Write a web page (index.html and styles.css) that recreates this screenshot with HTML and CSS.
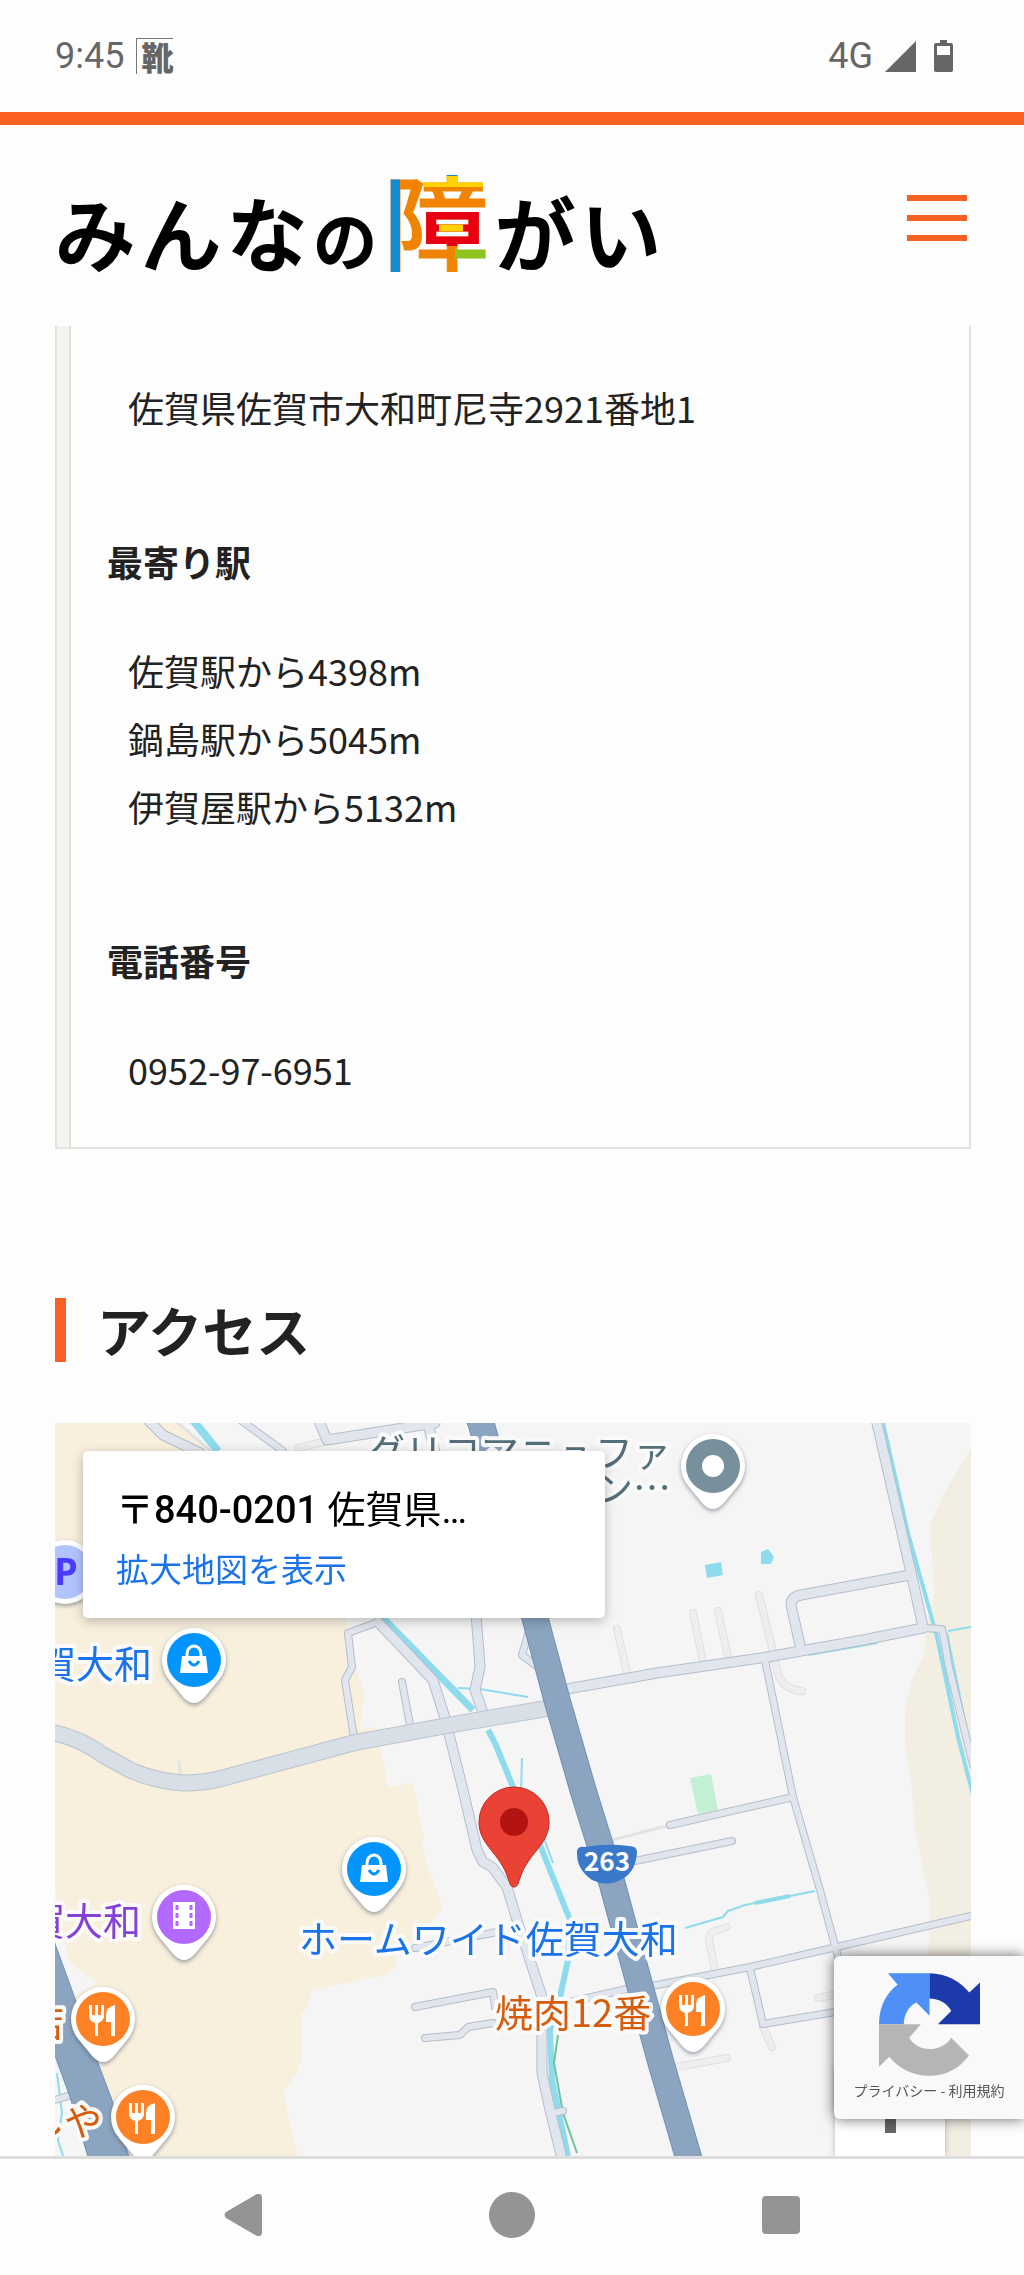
FILE: index.html
```html
<!DOCTYPE html>
<html lang="ja">
<head>
    <meta charset="UTF-8">
    <meta name="viewport" content="width=device-width, initial-scale=1.0">
    <title>みんなの障がい</title>
    <link rel="stylesheet" href="styles.css">
</head>
<body>
    <div class="status-bar">
        <div class="status-left">
            <span>9:45</span>
            <span class="status-badge">靴</span>
        </div>
        <div class="status-right">
            <span>4G</span>
            <svg width="31" height="31" viewBox="0 0 31 31"><path d="M31 0V31H0Z" fill="#666"/></svg>
            <svg class="battery" width="19" height="32" viewBox="0 0 19 32">
                <path d="M6 0H13V3H17Q19 3 19 5V30Q19 32 17 32H2Q0 32 0 30V5Q0 3 2 3H6Z" fill="#666"/>
                <rect x="3" y="6" width="13" height="9" fill="#fff"/>
            </svg>
        </div>
    </div>

    <header class="header">
        <a class="logo" href="#">
            <span>み</span><span>ん</span><span>な</span><span class="logo-small">の</span><span class="logo-color">障</span><span>が</span><span>い</span>
        </a>
        <button class="menu-button" type="button" aria-label="メニュー">
            <span></span>
            <span></span>
            <span></span>
        </button>
    </header>

    <main class="main">
        <dl class="info">
            <dd>佐賀県佐賀市大和町尼寺2921番地1</dd>
            <dt>最寄り駅</dt>
            <dd>佐賀駅から4398m<br>鍋島駅から5045m<br>伊賀屋駅から5132m</dd>
            <dt>電話番号</dt>
            <dd>0952-97-6951</dd>
        </dl>

        <h2 class="section-title">アクセス</h2>

        <div class="map">
            <svg class="map-canvas" viewBox="0 0 916 733" preserveAspectRatio="xMidYMin slice">
                <defs>
                    <path id="pin" d="M0 43Q-5 43-10 38L-24 21A32 32 0 1 1 24 21L10 38Q5 43 0 43Z" fill="#fff"/>
                    <g id="bag">
                        <path d="M-12-4H12L14 13H-14Z" fill="#fff"/>
                        <path d="M-7-3V-6A7 8 0 0 1 7-6V-3" fill="none" stroke="#fff" stroke-width="3"/>
                        <path d="M-5 1Q0 9 5 1" fill="none" stroke="#0395ff" stroke-width="3"/>
                    </g>
                    <g id="food" fill="#fff">
                        <path d="M-14-14H-11V-4H-8V-14H-5V-4H-2V-14H1V-3Q1 2-5 4V17H-8V4Q-14 2-14-3Z"/>
                        <path d="M12-14V17H8V3H3V-4Q3-12 12-14Z"/>
                    </g>
                </defs>

                <rect width="916" height="733" fill="#f5f5f5"/>
                <!-- land areas -->
                <path fill="#f8efdd" d="M0 0H123L170 40 290 195 295 220 300 244 309 270 305 307 320 304 327 334 333 364 358 360 369 414 367 417 370 437 388 484 375 500 341 534V544L333 551 258 567 252 584 246 590 247 634 242 650 228 669 243 733H73L38 634 18 575 43 559 33 554 13 537 8 507 0 467Z"/>
                <path fill="#f3eee2" d="M916 25 888 72 875 102 879 170 872 204 868 234 857 257 850 287V320L857 367 860 407 875 480 873 534V733H916Z"/>
                <path fill="#c3efd2" d="M635 355 656 351 663 387 643 391Z"/>

                <!-- water -->
                <g fill="none" stroke="#8fdbee" stroke-linejoin="round">
                    <path stroke-width="8" d="M137-4 163 28"/>
                    <path stroke-width="7" d="M326 193 418 287"/>
                    <path stroke-width="6" d="M433 307 440 320 458 364 487 427 515 497 513 537 505 574 495 607 497 657 513 733"/>
                    <path stroke-width="2" d="M403 265 425 266 473 274M467 335 466 370M2 650 7 690 3 717 8 733M487 410 498 440"/>
                    <path stroke-width="4" d="M828 0 853 110 882 214 903 314 918 372"/>
                    <path stroke-width="2" d="M893 208 916 204M892 210 914 317M630 505 668 494 673 488 690 482 735 473 760 468"/>
                    <path stroke-width="4" d="M753 231 822 219M700 480 735 473"/>
                </g>
                <path fill="#8fdbee" d="M650 142 666 139 668 152 652 155ZM706 129 713 126 719 134 716 141H706Z"/>
                <path fill="none" stroke="#6cc3a0" stroke-width="2" d="M503 612 499 640 508 690 522 730"/>

                <!-- faint lanes -->
                <g fill="none" stroke-linecap="round" stroke-linejoin="round">
                    <path stroke="#e0e0e0" stroke-width="8" d="M562 206 572 250M638 190 648 239M663 188 673 234M704 172 717 225 723 250Q727 266 747 268M672 504 660 508Q653 510 654 517L660 547M708 604 717 624M622 644 672 635M778 572 763 575M243 25 268 19"/>
                    <path stroke="#eee" stroke-width="6" d="M562 206 572 250M638 190 648 239M663 188 673 234M704 172 717 225 723 250Q727 266 747 268M672 504 660 508Q653 510 654 517L660 547M708 604 717 624M622 644 672 635M778 572 763 575M243 25 268 19"/>
                    <path stroke="#e3e3e5" stroke-width="3" d="M615 402 557 417M123 0 158 30M124 339 126 355"/>
                </g>

                <!-- minor roads: edge, then fill -->
                <g fill="none" stroke="#b5bdcb" stroke-linecap="round" stroke-linejoin="round">
                    <path stroke-width="11" d="M323 199 378 257 390 295 408 367 422 427 428 439 437 444 452 464 462 497 487 574V650L495 687 508 740M421 190 425 244 420 267 428 290M821-4 857 154 868 204M512 266 602 250 712 234 808 217 868 205M855 152 746 172Q736 174 736 182L745 222M92-4 108 12 145 30M263-4 272 17 380 0M372-4 380 30"/>
                    <path stroke-width="8" d="M323 199 293 210 297 244 290 257 299 315M347 259 355 302M473 211 467 232 480 242M187-2 228 28M868 205 887 206 890 220 893 240 918 342M710 237 738 374 765 467 783 534M738 374 615 402M677 418 575 439M920 492 782 524 695 544 597 563M572 566 515 579M695 545 708 601 780 589M360 584 438 569 440 584M370 615 405 612 413 604 438 600M360 525 442 509M497 690 508 688M0 677 13 673"/>
                </g>
                <g fill="none" stroke="#e1e6ee" stroke-linecap="round" stroke-linejoin="round">
                    <path stroke-width="9" d="M323 199 378 257 390 295 408 367 422 427 428 439 437 444 452 464 462 497 487 574V650L495 687 508 740M421 190 425 244 420 267 428 290M821-4 857 154 868 204M512 266 602 250 712 234 808 217 868 205M855 152 746 172Q736 174 736 182L745 222M92-4 108 12 145 30M263-4 272 17 380 0M372-4 380 30"/>
                    <path stroke-width="6" d="M323 199 293 210 297 244 290 257 299 315M347 259 355 302M473 211 467 232 480 242M187-2 228 28M868 205 887 206 890 220 893 240 918 342M710 237 738 374 765 467 783 534M738 374 615 402M677 418 575 439M920 492 782 524 695 544 597 563M572 566 515 579M695 545 708 601 780 589M360 584 438 569 440 584M370 615 405 612 413 604 438 600M360 525 442 509M497 690 508 688M0 677 13 673"/>
                </g>

                <!-- main road -->
                <g fill="none" stroke-linejoin="round">
                    <path stroke="#bac4ce" stroke-width="17" d="M-4 309Q25 315 48 332L75 347Q100 358 128 360 150 360 168 355L235 337 298 320 395 302 494 285"/>
                    <path stroke="#d8dfe7" stroke-width="15" d="M-4 309Q25 315 48 332L75 347Q100 358 128 360 150 360 168 355L235 337 298 320 395 302 494 285"/>
                </g>

                <!-- highways -->
                <g fill="none" stroke-linejoin="round">
                    <path stroke="#6f92b8" stroke-width="27" d="M422-10 426 0 480 195 502 277 528 367 557 460 577 534 606 640 636 743"/>
                    <path stroke="#8ba4c0" stroke-width="25" d="M422-10 426 0 480 195 502 277 528 367 557 460 577 534 606 640 636 743"/>
                </g>
                <path fill="#8ba4c0" stroke="#6f92b8" stroke-width="1" d="M-1 518 18 570 38 627 57 677 74 734H33L15 674-1 630Z"/>

                <!-- national route sign -->
                <path fill="#3a78c9" d="M522 428Q523 423 530 424 552 420 574 423 582 423 582 429 581 447 569 455 553 465 537 457 521 446 522 428Z"/>
                <text class="route" x="552" y="448">263</text>

                <!-- pins -->
                <g class="pins">
                    <circle cx="10" cy="149" r="32" fill="#fff"/>
                    <use href="#pin" x="139" y="237"/>
                    <use href="#pin" x="319" y="446"/>
                    <use href="#pin" x="129" y="494"/>
                    <use href="#pin" x="48" y="596"/>
                    <use href="#pin" x="88" y="694"/>
                    <use href="#pin" x="638" y="586"/>
                    <use href="#pin" x="658" y="43"/>
                </g>
                <circle cx="10" cy="149" r="27" fill="#b2c4ff"/>
                <circle cx="139" cy="237" r="27" fill="#0395ff"/>
                <use href="#bag" x="139" y="237"/>
                <circle cx="319" cy="446" r="27" fill="#0395ff"/>
                <use href="#bag" x="319" y="446"/>
                <circle cx="129" cy="494" r="27" fill="#b368ff"/>
                <path d="M118 479H140V506H118Z" fill="#fff"/>
                <path d="M122 482V506M136 482V506" stroke="#b368ff" stroke-width="3" stroke-dasharray="5 3"/>
                <circle cx="48" cy="596" r="27" fill="#ff8126"/>
                <use href="#food" x="48" y="596"/>
                <circle cx="88" cy="694" r="27" fill="#ff8126"/>
                <use href="#food" x="88" y="694"/>
                <circle cx="638" cy="586" r="27" fill="#ff8126"/>
                <use href="#food" x="638" y="586"/>
                <circle cx="658" cy="43" r="27" fill="#78909c"/>
                <circle cx="658" cy="43" r="11" fill="#fff"/>
                <path d="M459 464C455 464 455 460 453 455 445 430 424 422 424 399A35 35 0 0 1 494 399C494 422 473 430 465 455 463 460 463 464 459 464Z" fill="#ea4335" stroke="#c5221f" stroke-width="1"/>
                <circle cx="459" cy="399" r="14" fill="#b31412"/>

                <!-- place names -->
                <text class="parking" x="-1" y="162">P</text>
                <g class="places">
                    <text class="place-gray" x="312" y="43">グリコマニュファ</text>
                    <text class="place-gray place-end" x="616" y="79">クチャリン…</text>
                    <text class="place-blue place-end" x="97" y="255">賀大和</text>
                    <text class="place-blue" x="244" y="530">ホームワイド佐賀大和</text>
                    <text class="place-purple place-end" x="86" y="512">賀大和</text>
                    <text class="place-orange" x="440" y="604">焼肉12番</text>
                    <text class="place-orange place-end" x="9" y="613">店</text>
                    <text class="place-orange place-end" x="47" y="712">しや</text>
                </g>
            </svg>

            <div class="map-card">
                <div class="map-address"><b>〒840-0201</b> 佐賀県…</div>
                <a class="map-link" href="#">拡大地図を表示</a>
            </div>
            <button class="map-zoom" type="button" aria-label="拡大"></button>
        </div>
    </main>

    <aside class="recaptcha">
        <svg width="101" height="103" viewBox="0 0 302 307">
            <path fill="#4e90f5" d="M27 0H151V127L112 88C92 96 75 120 74 153H0C0 95 27 55 56 35Z"/>
            <path fill="#1c3aa9" d="M151 0C200 0 245 25 270 58L302 28V153H176L216 113C205 92 180 76 151 76Z"/>
            <path fill="#b5b5b5" d="M0 153H125L90 194C105 215 125 227 151 227 180 227 205 212 216 193L269 246C240 285 200 307 151 307 100 307 57 283 31 250L0 280Z"/>
        </svg>
        <div class="recaptcha-links"><a href="#">プライバシー</a> - <a href="#">利用規約</a></div>
    </aside>

    <nav class="system-nav">
        <button type="button" aria-label="戻る">
            <svg width="38" height="42" viewBox="0 0 38 42"><path d="M33 0Q38-1 38 4V38Q38 43 33 42L2 24Q-1 21 2 18Z" fill="#949494"/></svg>
        </button>
        <button type="button" aria-label="ホーム">
            <svg width="46" height="46" viewBox="0 0 46 46"><circle cx="23" cy="23" r="23" fill="#949494"/></svg>
        </button>
        <button type="button" aria-label="履歴">
            <svg width="38" height="38" viewBox="0 0 38 38"><rect width="38" height="38" rx="4" fill="#949494"/></svg>
        </button>
    </nav>
</body>
</html>
```
FILE: styles.css
```css
* {
    box-sizing: border-box;
}

body {
    margin: 0;
    background-color: #fdfdfd;
    color: #222;
    font-family: "Noto Sans CJK JP", sans-serif;
    font-size: 36px;
    line-height: 68px;
}

button {
    border: none;
    padding: 0;
    background: none;
    cursor: pointer;
}

a {
    text-decoration: none;
}

svg {
    display: block;
}

.status-bar {
    display: flex;
    justify-content: space-between;
    align-items: center;
    height: 112px;
    padding: 0 71px 0 55px;
    color: #666;
    font-family: Roboto, sans-serif;
    font-size: 36px;
    font-weight: 400;
}

.status-left,
.status-right {
    display: flex;
    align-items: center;
    gap: 12px;
}

.battery {
    margin-left: 6px;
}

.status-badge {
    border-top: 1px solid #777;
    border-left: 1px solid #777;
    padding: 0 0 1px 4px;
    font-family: "Noto Sans CJK JP", sans-serif;
    font-size: 32px;
    font-weight: 900;
    line-height: 34px;
}

.header {
    display: flex;
    justify-content: space-between;
    align-items: center;
    height: 214px;
    padding: 0 57px 14px 55px;
    border-top: 13px solid #fb6023;
}

.logo {
    display: flex;
    align-items: baseline;
    gap: 6px;
    color: #000;
    font-size: 80px;
    font-weight: 500;
    line-height: 1;
    -webkit-text-stroke: 2px #000;
}

.logo-small {
    font-size: 64px;
}

/* every stroke of the middle character has its own colour */
.logo-color {
    font-size: 106px;
    font-weight: 500;
    color: transparent;
    -webkit-text-stroke: 1px transparent;
    background-color: #f08300;
    background-image:
        linear-gradient(#138bd0, #138bd0),
        linear-gradient(#138bd0, #138bd0),
        linear-gradient(#ffd100, #ffd100),
        linear-gradient(#ffd100, #ffd100),
        linear-gradient(#e60012, #e60012),
        linear-gradient(#8fc31f, #8fc31f);
    background-repeat: no-repeat;
    background-position: 0 0, 60px 0, 40px 10px, 56px 58px, 40px 46px, 72px 82px;
    background-size: 17px 106px, 20px 10px, 66px 11px, 24px 9px, 66px 34px, 34px 12px;
    -webkit-background-clip: text;
    background-clip: text;
}

.menu-button {
    display: flex;
    flex-direction: column;
    gap: 14px;
    width: 60px;
    margin-bottom: 2px;
}

.menu-button span {
    height: 6px;
    background-color: #fb6023;
}

.main {
    padding: 0 53px 0 55px;
}

.info {
    margin: 0;
    padding: 47px 36px 44px;
    border: 2px solid #e2e2dc;
    border-top: none;
    background: linear-gradient(to right, #f5f4f1 12px, #e2e2dc 12px, #e2e2dc 14px, #fdfdfd 14px);
}

.info dt {
    margin: 86px 0 41px 14px;
    font-weight: 700;
}

.info dd {
    margin: 0 0 0 35px;
}

.section-title {
    margin: 149px 0 61px;
    padding-left: 31px;
    border-left: 11px solid #fb6023;
    font-size: 54px;
    line-height: 64px;
}

.map {
    position: relative;
    height: 733px;
    overflow: hidden;
}

.map-canvas {
    width: 100%;
    height: 100%;
}

.pins {
    filter: drop-shadow(0 2px 2px rgba(60, 70, 90, 0.5));
}

.places {
    font-size: 38px;
    paint-order: stroke;
    stroke: #fafafa;
    stroke-width: 8px;
    stroke-linejoin: round;
}

.place-end {
    text-anchor: end;
}

.place-gray {
    fill: #546e7a;
}

.place-blue {
    fill: #1a73e8;
}

.place-purple {
    fill: #8440d8;
}

.place-orange {
    fill: #d65c0c;
}

.parking {
    fill: #4c3bff;
    font-family: "Open Sans", sans-serif;
    font-size: 38px;
    font-weight: 700;
}

.route {
    fill: #fff;
    font-size: 26px;
    font-weight: 700;
    text-anchor: middle;
}

.map-card {
    position: absolute;
    top: 28px;
    left: 28px;
    width: 522px;
    padding: 30px 33px 21px;
    border-radius: 5px;
    background-color: #fff;
    box-shadow: 0 3px 12px rgba(0, 0, 0, 0.25);
    line-height: 58px;
}

.map-address {
    color: #000;
    font-family: Roboto, "Noto Sans CJK JP", sans-serif;
    font-size: 38px;
}

.map-address b {
    font-weight: 500;
}

.map-link {
    display: block;
    color: #1a73e8;
    font-size: 33px;
}

.map-zoom {
    position: absolute;
    right: 26px;
    bottom: 0;
    width: 110px;
    height: 90px;
    background: linear-gradient(#666, #666) 50px 33px / 11px 34px no-repeat #fff;
    box-shadow: 0 0 6px rgba(0, 0, 0, 0.25);
}

.recaptcha {
    position: fixed;
    right: 0;
    bottom: 156px;
    display: flex;
    flex-direction: column;
    align-items: center;
    width: 190px;
    height: 163px;
    padding-top: 17px;
    border-radius: 6px 0 0 6px;
    background-color: #f9f9f9;
    box-shadow: 0 0 14px rgba(0, 0, 0, 0.6);
}

.recaptcha-links,
.recaptcha-links a {
    color: #555;
    font-size: 14px;
    line-height: 28px;
}

.system-nav {
    display: grid;
    grid-template-columns: repeat(3, 1fr);
    height: 119px;
    padding: 0 108px 4px;
    border-top: 3px solid #ddd;
}

.system-nav button {
    display: flex;
    justify-content: center;
    align-items: center;
}
```
